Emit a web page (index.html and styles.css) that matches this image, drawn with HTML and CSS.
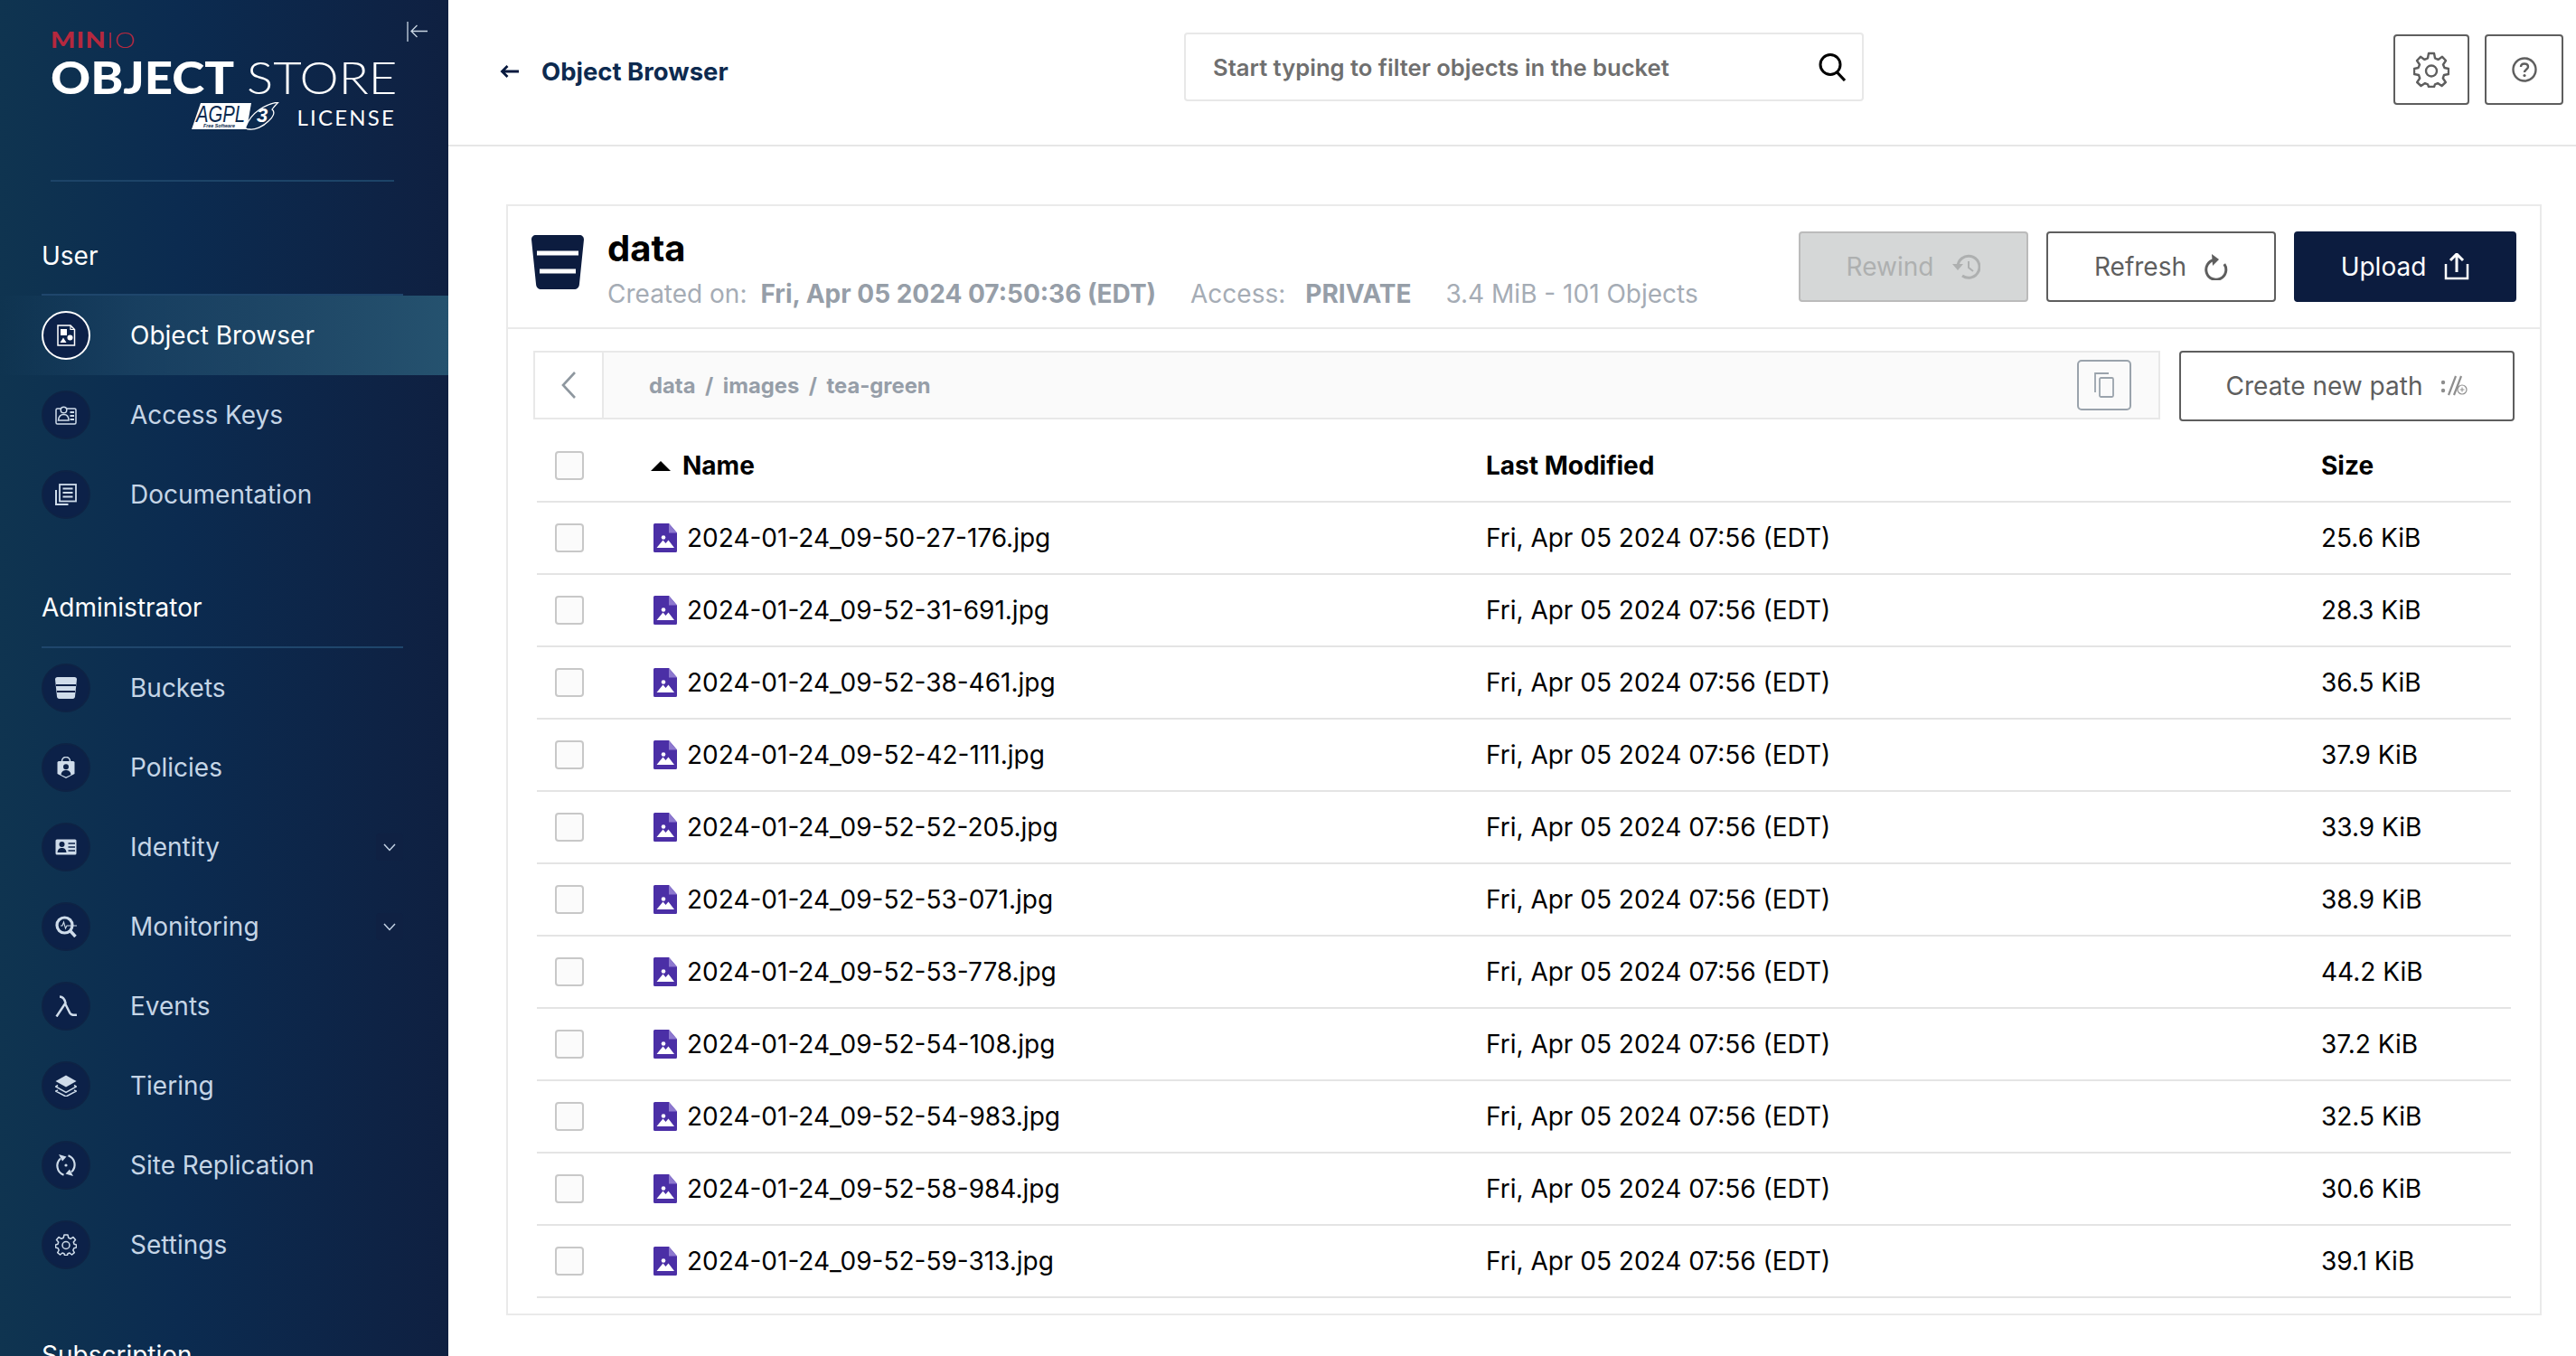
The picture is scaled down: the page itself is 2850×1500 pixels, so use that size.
FILE: index.html
```html
<!DOCTYPE html>
<html lang="en">
<head>
<meta charset="utf-8">
<title>MinIO Object Store</title>
<link rel="stylesheet" href="styles.css">
</head>
<body>
<svg class="defs" width="0" height="0">
  <symbol id="file" viewBox="0 0 26 32">
    <path d="M1.500 0H17L26 10.500V30.500A1.500 1.500 0 0 1 24.500 32H1.500A1.500 1.500 0 0 1 0 30.500V1.500A1.500 1.500 0 0 1 1.500 0Z" fill="#4b2fa6"/>
    <path d="M17 0L26 10.500H17Z" fill="#8d78cf"/>
    <circle cx="11" cy="15.500" r="2.300" fill="#fff"/>
    <path d="M3.500 27L10.500 18.500L13.500 22L16.500 18.500L23 27Z" fill="#fff"/>
  </symbol>
  <symbol id="bucket" viewBox="0 0 24 24">
    <path d="M0 2.500C0 1 1 0 2.500 0H21.500C23 0 24 1 24 2.500L22 21.500C21.800 23 21 24 19.500 24H4.500C3 24 2.200 23 2 21.500Z" fill="currentColor"/>
  </symbol>
</svg>
<div class="app">
  <aside class="sidebar">
    <svg class="collapse" viewBox="0 0 24 24" width="24" height="24"><path d="M1 1V23M23 11.500H5M11.500 5L5 11.500L11.500 18" fill="none" stroke="#c9d6e3" stroke-width="1.300"/></svg>
    <div class="brand">
      <div class="minio"><b>MIN</b><span>IO</span></div>
      <div class="product"><b>OBJECT</b> <span>STORE</span></div>
      <div class="license">
        <svg class="agpl" viewBox="0 0 98 32" width="98" height="32">
          <path d="M10 1H66L61 30H0Z" fill="#fff"/>
          <path d="M60 27C66 11 82 2 96 0C93 3 91 5 89 8C93 11 90 17 85 21C79 27 70 31 64 30C61 30 59 29 60 27Z" fill="#0c2a4f" stroke="#fff" stroke-width="1.300"/>
          <text x="5" y="22" class="agpl-main" textLength="54" lengthAdjust="spacingAndGlyphs">AGPL</text>
          <text x="13" y="28" class="agpl-sub" textLength="35" lengthAdjust="spacingAndGlyphs">Free Software</text>
          <text x="72" y="22" class="agpl-three">3</text>
        </svg>
        <span>LICENSE</span>
      </div>
    </div>

    <div class="group-label">User</div>
    <nav class="nav">
      <a class="nav-item active">
        <span class="badge"><svg viewBox="0 0 24 24"><path d="M3 1H17L21.500 5.500V23H3Z" fill="none" stroke="currentColor" stroke-width="1.500"/><path d="M17 1V5.500H21.500" fill="none" stroke="currentColor" stroke-width="1.200"/><rect x="6" y="5" width="7" height="7" fill="currentColor"/><circle cx="16.500" cy="14.500" r="3" fill="currentColor"/><path d="M5.500 20L9 14.500L12.500 20Z" fill="currentColor"/></svg></span>
        <span>Object Browser</span>
      </a>
      <a class="nav-item">
        <span class="badge"><svg viewBox="0 0 24 24"><path d="M7 5H2.500A1.500 1.500 0 0 0 1 6.500V20.500A1.500 1.500 0 0 0 2.500 22H21.500A1.500 1.500 0 0 0 23 20.500V6.500A1.500 1.500 0 0 0 21.500 5H13" fill="none" stroke="currentColor" stroke-width="1.500"/><circle cx="9.500" cy="6.500" r="3.300" fill="none" stroke="currentColor" stroke-width="1.500"/><path d="M3.500 18C4 13 7 11.500 9.500 11.500S15 13 15 18Z" fill="none" stroke="currentColor" stroke-width="1.500"/><path d="M16.500 9H21M16.500 13H21M16.500 17H21" stroke="currentColor" stroke-width="2.200"/></svg></span>
        <span>Access Keys</span>
      </a>
      <a class="nav-item">
        <span class="badge"><svg viewBox="0 0 24 24"><rect x="5" y="1" width="18" height="18.500" fill="none" stroke="currentColor" stroke-width="1.800"/><path d="M1 7V23H14.500" fill="none" stroke="currentColor" stroke-width="2"/><path d="M8.500 5.500H19.500M8.500 10H19.500M8.500 14.500H19.500" stroke="currentColor" stroke-width="2"/></svg></span>
        <span>Documentation</span>
      </a>
    </nav>

    <div class="group-label admin">Administrator</div>
    <nav class="nav">
      <a class="nav-item">
        <span class="badge"><svg viewBox="0 0 24 24"><use href="#bucket"/><path d="M1 9H23M2 16H22" stroke="#0c2148" stroke-width="2"/></svg></span>
        <span>Buckets</span>
      </a>
      <a class="nav-item">
        <span class="badge"><svg viewBox="0 0 24 24"><path d="M7.500 6V5A4.500 4.500 0 0 1 16.500 5V6" fill="none" stroke="currentColor" stroke-width="1.600"/><path d="M2.500 6.500Q2.500 5 4 5H20Q21.500 5 21.500 6.500V19L12 24L2.500 19Z" fill="currentColor"/><circle cx="12" cy="11.300" r="3" fill="#0c2148"/><path d="M6.500 20C7 16 9.500 15 12 15S17 16 17.500 20L12 22.500Z" fill="#0c2148"/></svg></span>
        <span>Policies</span>
      </a>
      <a class="nav-item">
        <span class="badge"><svg viewBox="0 0 24 24"><rect x="0.500" y="3.500" width="23" height="17" rx="1.500" fill="currentColor"/><circle cx="7.500" cy="9" r="3" fill="#0c2148"/><path d="M2.500 18C3 14 5 13 7.500 13S12 14 12.500 18Z" fill="#0c2148"/><path d="M14.500 8H22M14.500 12H22M14.500 16H22" stroke="#0c2148" stroke-width="1.600"/></svg></span>
        <span>Identity</span>
        <span class="chev"><svg viewBox="0 0 14 14" width="14" height="14"><path d="M1 4L7 10.500L13 4" fill="none" stroke="#c5d5e6" stroke-width="1.500"/></svg></span>
      </a>
      <a class="nav-item">
        <span class="badge"><svg viewBox="0 0 24 24"><circle cx="10.500" cy="10.500" r="8.500" fill="none" stroke="currentColor" stroke-width="3.200"/><path d="M16 16L22.500 23" stroke="currentColor" stroke-width="3.500"/><path d="M6 11H8L9.500 7L11.500 14L13 11H24" fill="none" stroke="currentColor" stroke-width="1.100"/></svg></span>
        <span>Monitoring</span>
        <span class="chev"><svg viewBox="0 0 14 14" width="14" height="14"><path d="M1 4L7 10.500L13 4" fill="none" stroke="#c5d5e6" stroke-width="1.500"/></svg></span>
      </a>
      <a class="nav-item">
        <span class="badge"><svg viewBox="0 0 24 24"><path d="M1.500 23.500L11.500 8.500C10.500 4 9 1.500 5 1.500M11 9L16 19C17 21.500 19 22.300 24 21.700" fill="none" stroke="currentColor" stroke-width="2.500"/></svg></span>
        <span>Events</span>
      </a>
      <a class="nav-item">
        <span class="badge"><svg viewBox="0 0 24 24"><path d="M12 .5L23.500 7L12 13.500L.5 7Z" fill="currentColor"/><path d="M3 11.500L.5 13L12 19.500L23.500 13L21 11.500M3 17L.5 18L12 24L23.500 18L21 17" fill="none" stroke="currentColor" stroke-width="1.500"/></svg></span>
        <span>Tiering</span>
      </a>
      <a class="nav-item">
        <span class="badge"><svg viewBox="0 0 24 24"><path d="M6 4.500A10.800 10.800 0 0 0 9.500 22.700M18 19.500A10.800 10.800 0 0 0 14.500 1.300" fill="none" stroke="currentColor" stroke-width="2.200"/><path d="M4 0L12.500 2.500L8 7.500ZM20 24L11.500 21.500L16 16.500Z" fill="currentColor"/><circle cx="12" cy="12" r="1.600" fill="currentColor"/></svg></span>
        <span>Site Replication</span>
      </a>
      <a class="nav-item">
        <span class="badge"><svg viewBox="0 0 24 24"><path d="M10 1H14L14.800 4.300L17 5.300L20 3.500L22.500 6.500L20.300 9L21 11.200L23.500 12V15L20.800 15.800L19.800 18L21.300 20.700L18.500 23L16 21L14 21.800L13.500 23.500H10.500L10 21.800L8 21L5.500 23L2.700 20.700L4.200 18L3.200 15.800L.5 15V12L3 11.200L3.700 9L1.500 6.500L4 3.500L7 5.300L9.200 4.300Z" fill="none" stroke="currentColor" stroke-width="1.500" stroke-linejoin="round"/><circle cx="12" cy="12.500" r="4" fill="none" stroke="currentColor" stroke-width="1.500"/></svg></span>
        <span>Settings</span>
      </a>
    </nav>

    <div class="group-label sub">Subscription</div>
  </aside>

  <main class="main">
    <header class="topbar">
      <div class="crumb-title">
        <svg viewBox="0 0 22 16" width="22" height="16"><path d="M21 8H3M8.500 2L2.500 8L8.500 14" fill="none" stroke="#07193e" stroke-width="2.800"/></svg>
        <span>Object Browser</span>
      </div>
      <div class="search">
        <span>Start typing to filter objects in the bucket</span>
        <svg viewBox="0 0 32 32" width="32" height="32"><circle cx="14" cy="13.500" r="11" fill="none" stroke="#000" stroke-width="3"/><path d="M21.500 22L30 31" stroke="#000" stroke-width="3.200"/></svg>
      </div>
      <div class="top-actions">
        <button class="icon-btn gear"><svg viewBox="0 0 40 40" width="40" height="40"><path d="M17 2H23L24 7.300L27.500 8.900L32 5.800L36 10L33 14.500L34.500 18L39 19V25L34 26L32.800 29.500L35.800 34L31.500 38L27 35L24 36.300L23 39H17L16 36.300L13 35L8.500 38L4.200 34L7.200 29.500L6 26L1 25V19L5.500 18L7 14.500L4 10L8 5.800L12.500 8.900L16 7.300Z" fill="none" stroke="#5e5e5e" stroke-width="2.400" stroke-linejoin="round"/><circle cx="20" cy="21.500" r="6" fill="none" stroke="#5e5e5e" stroke-width="2.400"/></svg></button>
        <button class="icon-btn help"><svg viewBox="0 0 28 28" width="28" height="28"><circle cx="14" cy="14" r="12.500" fill="none" stroke="#5e5e5e" stroke-width="2.400"/><path d="M10 11C10 8.500 12 7.500 14 7.500C16.500 7.500 18 9 18 11C18 13.500 14 14 14 17" fill="none" stroke="#5e5e5e" stroke-width="2.400"/><circle cx="14" cy="20.500" r="1.600" fill="#5e5e5e"/></svg></button>
      </div>
    </header>

    <section class="content">
      <div class="card">
        <div class="bucket-head">
          <svg class="bucket-icon" viewBox="0 0 58 60" width="58" height="60"><path d="M0 5C0 2 2 0 5 0H53C56 0 58 2 58 5L53 54C52.700 58 50.500 60 47 60H11C7.500 60 5.300 58 5 54Z" fill="#0c1c3f"/><path d="M6 20H52" stroke="#fff" stroke-width="5"/><path d="M9 40H49" stroke="#fff" stroke-width="5"/></svg>
          <div class="bucket-text">
            <h1>data</h1>
            <div class="meta">
              <span>Created on:</span><b>Fri, Apr 05 2024 07:50:36 (EDT)</b>
              <span class="gap">Access:</span><b class="access">PRIVATE</b>
              <span class="gap">3.4 MiB - 101 Objects</span>
            </div>
          </div>
          <div class="head-actions">
            <button class="btn disabled">Rewind <svg viewBox="0 0 32 28" width="32" height="28"><path d="M7 14A12 12 0 1 1 12 24" fill="none" stroke="#aeb0b0" stroke-width="3"/><path d="M1 11H13L7 18Z" fill="#aeb0b0"/><path d="M19 8V15L24 19" fill="none" stroke="#aeb0b0" stroke-width="2"/></svg></button>
            <button class="btn outline">Refresh <svg viewBox="0 0 26 30" width="26" height="30"><path d="M8 8.500A11 11 0 1 0 20 10" fill="none" stroke="#5e5e5e" stroke-width="3" transform="rotate(15 13 18)"/><path d="M8 1L16 7L9 14Z" fill="#5e5e5e"/></svg></button>
            <button class="btn primary">Upload <svg viewBox="0 0 28 30" width="28" height="30"><path d="M2 12V28H26V12" fill="none" stroke="#fff" stroke-width="2.500"/><path d="M14 1V21M7 8L14 1L21 8" fill="none" stroke="#fff" stroke-width="3"/></svg></button>
          </div>
        </div>

        <div class="path-row">
          <div class="pathbar">
            <span class="back"><svg viewBox="0 0 18 30" width="18" height="30"><path d="M16 1L3 15L16 29" fill="none" stroke="#8e979f" stroke-width="2.600"/></svg></span>
            <div class="path">data<i>/</i>images<i>/</i>tea-green</div>
            <span class="copy"><svg viewBox="0 0 22 28" width="22" height="28"><path d="M1 22V1H16" fill="none" stroke="#9aa3ac" stroke-width="1.800"/><rect x="6" y="6" width="15" height="21" rx="1.500" fill="none" stroke="#9aa3ac" stroke-width="1.800"/></svg></span>
          </div>
          <button class="btn outline new-path">Create new path <svg viewBox="0 0 30 24" width="30" height="24"><circle cx="3" cy="8" r="2.200" fill="#8e8e8e"/><circle cx="3" cy="17" r="2.200" fill="#8e8e8e"/><path d="M9 22L17 1M15 22L23 1" stroke="#8e8e8e" stroke-width="2.200"/><circle cx="24" cy="16" r="5" fill="none" stroke="#8e8e8e" stroke-width="1.200"/><path d="M21.500 16H26.500M24 13.500V18.500" stroke="#8e8e8e"/></svg></button>
        </div>

        <div class="table">
          <div class="row head">
            <span class="check"></span>
            <span class="name-head"><i class="sort"></i>Name</span>
            <span>Last Modified</span>
            <span>Size</span>
          </div>
          <div class="row"><span class="check"></span><span class="name"><svg width="26" height="32"><use href="#file"/></svg>2024-01-24_09-50-27-176.jpg</span><span>Fri, Apr 05 2024 07:56 (EDT)</span><span>25.6 KiB</span></div>
          <div class="row"><span class="check"></span><span class="name"><svg width="26" height="32"><use href="#file"/></svg>2024-01-24_09-52-31-691.jpg</span><span>Fri, Apr 05 2024 07:56 (EDT)</span><span>28.3 KiB</span></div>
          <div class="row"><span class="check"></span><span class="name"><svg width="26" height="32"><use href="#file"/></svg>2024-01-24_09-52-38-461.jpg</span><span>Fri, Apr 05 2024 07:56 (EDT)</span><span>36.5 KiB</span></div>
          <div class="row"><span class="check"></span><span class="name"><svg width="26" height="32"><use href="#file"/></svg>2024-01-24_09-52-42-111.jpg</span><span>Fri, Apr 05 2024 07:56 (EDT)</span><span>37.9 KiB</span></div>
          <div class="row"><span class="check"></span><span class="name"><svg width="26" height="32"><use href="#file"/></svg>2024-01-24_09-52-52-205.jpg</span><span>Fri, Apr 05 2024 07:56 (EDT)</span><span>33.9 KiB</span></div>
          <div class="row"><span class="check"></span><span class="name"><svg width="26" height="32"><use href="#file"/></svg>2024-01-24_09-52-53-071.jpg</span><span>Fri, Apr 05 2024 07:56 (EDT)</span><span>38.9 KiB</span></div>
          <div class="row"><span class="check"></span><span class="name"><svg width="26" height="32"><use href="#file"/></svg>2024-01-24_09-52-53-778.jpg</span><span>Fri, Apr 05 2024 07:56 (EDT)</span><span>44.2 KiB</span></div>
          <div class="row"><span class="check"></span><span class="name"><svg width="26" height="32"><use href="#file"/></svg>2024-01-24_09-52-54-108.jpg</span><span>Fri, Apr 05 2024 07:56 (EDT)</span><span>37.2 KiB</span></div>
          <div class="row"><span class="check"></span><span class="name"><svg width="26" height="32"><use href="#file"/></svg>2024-01-24_09-52-54-983.jpg</span><span>Fri, Apr 05 2024 07:56 (EDT)</span><span>32.5 KiB</span></div>
          <div class="row"><span class="check"></span><span class="name"><svg width="26" height="32"><use href="#file"/></svg>2024-01-24_09-52-58-984.jpg</span><span>Fri, Apr 05 2024 07:56 (EDT)</span><span>30.6 KiB</span></div>
          <div class="row"><span class="check"></span><span class="name"><svg width="26" height="32"><use href="#file"/></svg>2024-01-24_09-52-59-313.jpg</span><span>Fri, Apr 05 2024 07:56 (EDT)</span><span>39.1 KiB</span></div>
        </div>
      </div>
    </section>
  </main>
</div>
</body>
</html>
```

FILE: styles.css
```css
* { box-sizing: border-box; }
html, body { margin: 0; height: 100%; overflow: hidden; background: #fff; }
body { font-family: Inter, "Liberation Sans", sans-serif; color: #000; }
button { font-family: inherit; }
.defs { position: absolute; }

.app { display: flex; height: 1500px; overflow: hidden; }

/* Sidebar */
.sidebar {
  position: relative;
  flex: 0 0 496px;
  width: 496px;
  height: 1500px;
  overflow: hidden;
  background: linear-gradient(90deg, #0f3450 0%, #0b2b50 40%, #0f2041 100%);
  color: #c5d5e6;
}
.collapse { position: absolute; left: 450px; top: 23px; }
.brand {
  height: 201px;
  margin: 0 60px 0 56px;
  padding-top: 32px;
  border-bottom: 2px solid #1d4468;
}
.minio { height: 24px; font-family: Lato, sans-serif; font-size: 24px; line-height: 24px; color: #b5283e; letter-spacing: 1px; transform: scaleX(1.2); transform-origin: 0 50%; }
.minio b { font-weight: 900; }
.minio span { font-weight: 300; }
.product { height: 52px; margin-top: 3px; font-family: Lato, sans-serif; font-size: 50px; line-height: 52px; color: #fff; white-space: nowrap; transform: scaleX(1.09); transform-origin: 0 50%; }
.product b { font-weight: 900; }
.product span { font-weight: 300; }
.license { display: flex; justify-content: flex-end; align-items: center; gap: 18px; margin-top: 2px; color: #fff; }
.license span { font-family: Lato, sans-serif; font-weight: 400; font-size: 24px; letter-spacing: 2.200px; margin-right: -2px; }
.agpl-main { font: italic 400 25px "Liberation Sans", sans-serif; fill: #0c2a4f; }
.agpl-sub { font: italic 700 6px "Liberation Sans", sans-serif; fill: #0c2a4f; }
.agpl-three { font: italic 700 22px "Liberation Sans", sans-serif; fill: #fff; }

.group-label {
  height: 65px;
  margin: 61px 50px 0 46px;
  border-bottom: 2px solid #1f466c;
  color: #fff;
  font-size: 28px;
  line-height: 42px;
}
.group-label.admin { margin-top: 60px; height: 66px; line-height: 38px; padding-top: 2px; }
.group-label.sub { margin-top: 57px; border: 0; }

.nav { display: flex; flex-direction: column; }
.nav-item {
  display: flex;
  align-items: center;
  height: 88px;
  padding: 0 50px 0 46px;
  font-size: 28px;
  color: #c5d5e6;
}
.nav-item.active {
  color: #fff;
  background: linear-gradient(90deg, rgba(37, 82, 111, 0) 0%, rgba(30, 72, 104, .65) 30%, #25526f 100%);
}
.badge {
  display: flex;
  flex: 0 0 54px;
  align-items: center;
  justify-content: center;
  width: 54px;
  height: 54px;
  margin-right: 44px;
  border-radius: 50%;
  background: #0c2148;
  border: 2px solid #0e2345;
  color: #cfdcea;
}
.badge svg { width: 24px; height: 24px; }
.active .badge { border-color: #fff; color: #fff; }
.chev {
  display: flex;
  align-items: center;
  justify-content: center;
  width: 30px;
  height: 30px;
  margin-left: auto;
  border-radius: 4px;
  background: #0f2143;
}

/* Main */
.main { flex: 1; min-width: 0; display: flex; flex-direction: column; }
.topbar {
  display: flex;
  flex: 0 0 162px;
  align-items: center;
  height: 162px;
  padding: 0 14px 0 57px;
  border-bottom: 2px solid #e6e6e6;
}
.crumb-title { display: flex; align-items: center; gap: 24px; width: 757px; margin-top: -2px; font-size: 27.500px; font-weight: 700; color: #0d2a4f; }
.search {
  display: flex;
  align-items: center;
  justify-content: space-between;
  width: 752px;
  height: 76px;
  margin-top: -12px;
  padding: 0 17px 0 30px;
  border: 2px solid #e8e8e8;
  border-radius: 4px;
  font-size: 25.600px;
  font-weight: 600;
  color: #6f6f6f;
}
.top-actions { display: flex; gap: 17px; margin-left: auto; margin-top: -6px; }
.icon-btn { display: flex; align-items: center; justify-content: center; height: 78px; padding: 0; background: #fff; border: 2px solid #5e5e5e; border-radius: 4px; }
.icon-btn.gear { width: 84px; }
.icon-btn.help { width: 87px; }

.content { padding: 64px 38px 0 64px; }
.card { height: 1229px; border: 2px solid #eaeaea; padding: 0 28px; }

.bucket-head { display: flex; align-items: flex-start; height: 136px; margin: 0 -28px; padding: 0 26px 0 26px; border-bottom: 2px solid #eaeaea; }
.bucket-icon { flex: none; margin-top: 32px; }
.bucket-text { margin-left: 26px; padding-top: 23px; }
.bucket-text h1 { margin: 0; font-size: 40px; line-height: 48px; font-weight: 700; }
.meta { margin-top: 6px; font-size: 28px; line-height: 40px; color: #a5acb5; white-space: nowrap; }
.meta b { margin-left: 15px; font-weight: 700; color: #969ea8; }
.meta b.access { margin-left: 22px; }
.meta .gap { margin-left: 30px; }
.head-actions { display: flex; gap: 20px; margin-left: auto; margin-top: 28px; }

.btn { display: flex; align-items: center; justify-content: center; gap: 20px; height: 78px; padding: 0; border: 2px solid #5e5e5e; border-radius: 4px; font-size: 28px; background: #fff; color: #5e5e5e; }
.btn.disabled { width: 254px; background: #d5d7d7; border-color: #bbbbbb; color: #aeb0b0; }
.btn.outline { width: 254px; }
.btn.primary { width: 246px; background: #0c1c3f; border-color: #0c1c3f; color: #fff; }

.path-row { display: flex; gap: 21px; margin-top: 24px; }
.pathbar { display: flex; align-items: center; flex: 1; height: 76px; background: #fafafa; border: 2px solid #e8e8e8; }
.back { display: flex; align-items: center; justify-content: center; width: 76px; height: 72px; background: #fff; border-right: 2px solid #e8e8e8; }
.path { flex: 1; padding-left: 50px; font-size: 23.800px; font-weight: 700; color: #969ea8; }
.path i { font-style: normal; margin: 0 10.500px; }
.copy { display: flex; align-items: center; justify-content: center; width: 60px; height: 56px; margin-right: 30px; border: 2px solid #9aa3ac; border-radius: 5px; }
.btn.new-path { flex: 0 0 371px; height: 78px; gap: 20px; }

.table { margin: 10px 4px 0 4px; }
.row {
  display: grid;
  grid-template-columns: 126px 924px 924px 1fr;
  align-items: center;
  height: 80px;
  border-bottom: 2px solid #e4e4e4;
  font-size: 28px;
}
.row.head { font-weight: 700; }
.check { display: block; width: 32px; height: 32px; margin-left: 20px; background: #fbfbfb; border: 2px solid #c8c8c8; border-radius: 4px; }
.name-head { display: flex; align-items: center; }
.sort { width: 0; height: 0; margin-right: 13px; border-left: 11px solid transparent; border-right: 11px solid transparent; border-bottom: 11px solid #000; }
.name { display: flex; align-items: center; gap: 11px; padding-left: 3px; }
```
